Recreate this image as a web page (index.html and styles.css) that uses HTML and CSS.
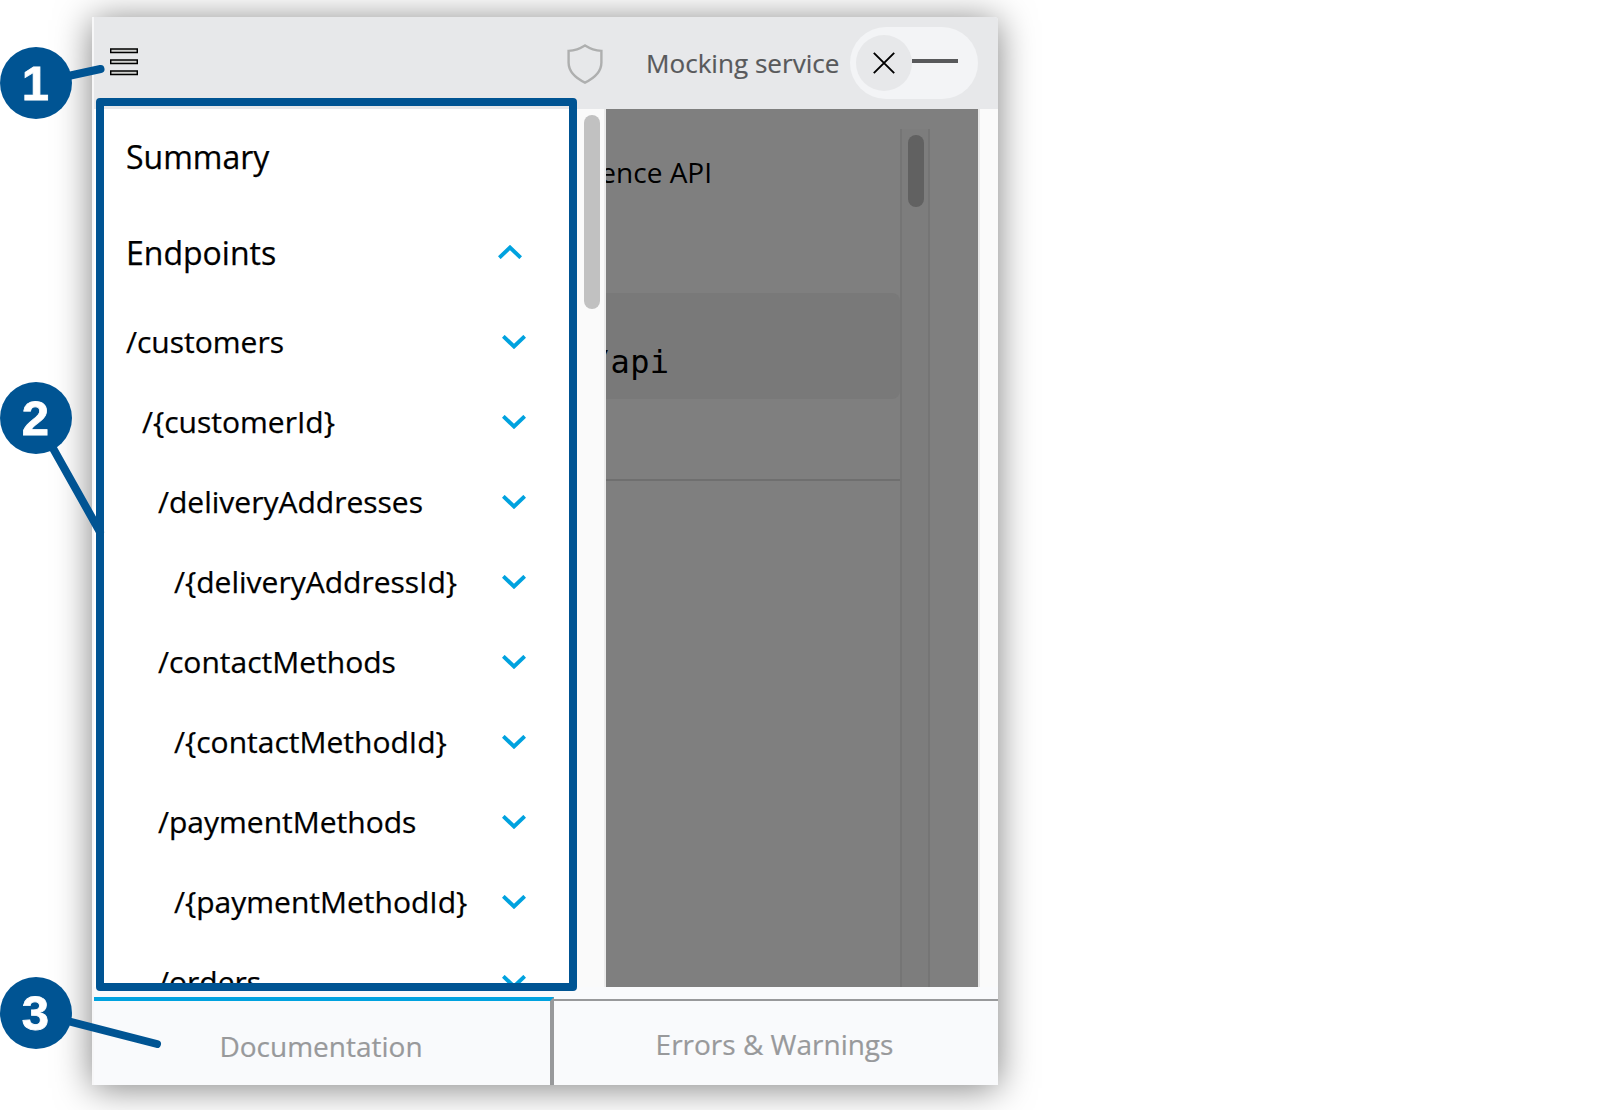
FILE: index.html
```html
<!DOCTYPE html>
<html lang="en">
<head>
<meta charset="utf-8">
<title>API documentation</title>
<link rel="stylesheet" href="styles.css">
</head>
<body>
<svg class="symbols" width="0" height="0">
  <symbol id="down" viewBox="0 0 24 14"><path d="M1.3 1.3 12 11.500 22.7 1.3" fill="none" stroke="#00a2df" stroke-width="3.9"/></symbol>
  <symbol id="up" viewBox="0 0 24 14"><path d="M1.3 12.7 12 2.500 22.7 12.7" fill="none" stroke="#00a2df" stroke-width="3.9"/></symbol>
</svg>
<div class="card">
  <header class="topbar">
    <svg class="menu" width="28" height="28" viewBox="0 0 28 28" fill="#d0d1cf" stroke="#000" stroke-width="1.5">
      <path d="M.7 1.100h26.6v3.5H.7zM.7 12.100h26.6v3.5H.7zM.7 23.100h26.6v3.5H.7z"/>
    </svg>
    <svg class="shield" width="36" height="40" viewBox="0 0 36 40" fill="none" stroke="#aeafaf" stroke-width="2.4">
      <path d="M18 1.4C13 4.5 7.500 6.400 1.600 6.900V18.500C1.600 27 8.500 34 18 38.600C27.500 34 34.400 27 34.400 18.500V6.900C28.500 6.400 23 4.500 18 1.400Z"/>
    </svg>
    <span class="mock-label">Mocking service</span>
    <div class="toggle">
      <span class="knob"><svg width="22" height="22" viewBox="0 0 22 22" stroke="#000" stroke-width="1.9" fill="none"><path d="M.8.8 21.200 21.200M21.200.8.8 21.200"/></svg></span>
      <span class="dash"></span>
    </div>
  </header>
  <main class="content">
    <nav class="drawer">
      <div class="row head summary"><span>Summary</span></div>
      <div class="row head endpoints"><span>Endpoints</span><svg class="chev"><use href="#up"/></svg></div>
      <div class="row"><span>/customers</span><svg class="chev"><use href="#down"/></svg></div>
      <div class="row l1"><span>/{customerId}</span><svg class="chev"><use href="#down"/></svg></div>
      <div class="row l2"><span>/deliveryAddresses</span><svg class="chev"><use href="#down"/></svg></div>
      <div class="row l3"><span>/{deliveryAddressId}</span><svg class="chev"><use href="#down"/></svg></div>
      <div class="row l2"><span>/contactMethods</span><svg class="chev"><use href="#down"/></svg></div>
      <div class="row l3"><span>/{contactMethodId}</span><svg class="chev"><use href="#down"/></svg></div>
      <div class="row l2"><span>/paymentMethods</span><svg class="chev"><use href="#down"/></svg></div>
      <div class="row l3"><span>/{paymentMethodId}</span><svg class="chev"><use href="#down"/></svg></div>
      <div class="row l2"><span>/orders</span><svg class="chev"><use href="#down"/></svg></div>
    </nav>
    <div class="track"><div class="thumb"></div></div>
    <section class="page">
      <div class="article">
        <div class="title"><span>ence API</span></div>
        <div class="code"><span>/api</span></div>
      </div>
      <div class="inner-track"><div class="inner-thumb"></div></div>
    </section>
    <div class="gutter"></div>
  </main>
  <footer class="tabs">
    <div class="tab active">Documentation</div>
    <div class="tab">Errors &amp; Warnings</div>
  </footer>
</div>
<div class="highlight"></div>
<svg class="leaders" width="200" height="1110" stroke="#005493" stroke-width="8" stroke-linecap="round">
  <path d="M36 83 100.500 69M36 418 100 532M36 1013 157 1044"/>
</svg>
<div class="badge one">1</div>
<div class="badge two">2</div>
<div class="badge three">3</div>
</body>
</html>
```

FILE: styles.css
```css
* { box-sizing: border-box; }
body {
  margin: 0;
  width: 1598px;
  height: 1110px;
  padding: 17px 0 0 92px;
  overflow: hidden;
  background: #fff;
  font-family: "Open Sans", "Noto Sans", sans-serif;
  color: #000;
}
.symbols { position: absolute; }
.card {
  width: 906px;
  height: 1068px;
  display: flex;
  flex-direction: column;
  background: #f9fafc;
  border-left: 2px solid #f7f7f8;
  border-top-right-radius: 4px;
  box-shadow: 0 3px 36px rgba(0, 0, 0, .5);
}
.topbar {
  height: 92px;
  flex: none;
  display: flex;
  align-items: center;
  padding: 0 20px 0 16px;
  background: #e7e8ea;
  border-top-right-radius: 4px;
}
.menu { margin-top: -2px; }
.shield { margin-left: 429px; margin-top: 1px; }
.mock-label {
  margin-left: 43px;
  width: 204px;
  font-size: 26.100px;
  color: #58595b;
  white-space: nowrap;
  -webkit-text-stroke: .2px;
}
.toggle {
  width: 128px;
  height: 72px;
  display: flex;
  align-items: center;
  padding-left: 6px;
  border-radius: 36px;
  background: #f3f4f6;
}
.knob {
  width: 56px;
  height: 56px;
  display: flex;
  align-items: center;
  justify-content: center;
  border-radius: 50%;
  background: #e7e8ea;
}
.dash { width: 46px; height: 4px; margin-top: -4px; background: #58595b; }
.content { height: 878px; flex: none; display: flex; }
.drawer {
  width: 482px;
  padding: 1px 50px 0 32px;
  overflow: hidden;
  background: #fff;
  -webkit-text-stroke: .25px;
}
.row {
  height: 80px;
  display: flex;
  align-items: center;
  justify-content: space-between;
  font-size: 30px;
  white-space: nowrap;
}
.row span { padding-bottom: 2px; }
.head { height: 96px; font-size: 32px; padding-bottom: 3px; }
.head span { padding-bottom: 0; }
.endpoints { padding-right: 4px; }
.endpoints .chev { margin-bottom: 1px; }
.l1 { padding-left: 16px; }
.l2 { padding-left: 32px; }
.l3 { padding-left: 48px; }
.chev { width: 24px; height: 14px; flex: none; }
.track {
  width: 30px;
  padding: 6px 0 0 8px;
  background: #fafafa;
  border-right: 2px solid #ebebeb;
}
.thumb { width: 16px; height: 194px; border-radius: 8px; background: #c1c1c1; }
.page { width: 372px; display: flex; background: #7f7f7f; }
.article { width: 294px; }
.title {
  width: 106px;
  height: 184px;
  padding-top: 44px;
  display: flex;
  justify-content: flex-end;
  overflow: hidden;
  font-size: 28px;
  line-height: 38px;
  white-space: nowrap;
}
.code {
  height: 106px;
  overflow: hidden;
  display: flex;
  align-items: center;
  padding-top: 32px;
  background: #797979;
  border-radius: 0 8px 8px 0;
  font-family: "DejaVu Sans Mono", monospace;
  font-size: 32px;
  line-height: 40px;
}
.code span { margin-left: -15px; letter-spacing: .3px; }
.article::after { content: ""; display: block; margin-top: 80px; height: 2px; background: #6f6f6f; }
.inner-track {
  width: 30px;
  margin-top: 20px;
  padding: 6px 0 0 6px;
  background: #7d7d7d;
  border: solid #757575;
  border-width: 0 2px;
}
.inner-thumb { width: 16px; height: 72px; border-radius: 8px; background: #616161; }
.gutter { flex: 1; border-left: 2px solid #e8e8e8; background: #fafafa; }
.tabs { flex: 1; display: flex; padding-top: 10px; }
.tab {
  flex: 1;
  margin-top: 2px;
  padding: 24px 3px 0 0;
  border-top: 2px solid #98999b;
  font-size: 28px;
  line-height: 38px;
  text-align: center;
  color: #98999b;
  -webkit-text-stroke: .2px;
}
.tab.active {
  flex: none;
  width: 460px;
  margin-top: 0;
  border-top: 4px solid #00a2df;
  border-right: 4px solid #98999b;
  padding: 26px 2px 0 0;
}
.highlight {
  position: absolute;
  left: 96px;
  top: 98px;
  width: 481px;
  height: 893px;
  border: 8px solid #005493;
  border-radius: 4px;
}
.leaders { position: absolute; left: 0; top: 0; }
.badge {
  position: absolute;
  left: 0;
  width: 72px;
  height: 72px;
  padding-right: 1px;
  border-radius: 50%;
  background: #005493;
  color: #fff;
  font: bold 49px/73px "Liberation Sans", Arial, sans-serif;
  text-align: center;
  -webkit-text-stroke: .8px;
}
.one { top: 47px; }
.two { top: 382px; }
.three { top: 977px; }
```
